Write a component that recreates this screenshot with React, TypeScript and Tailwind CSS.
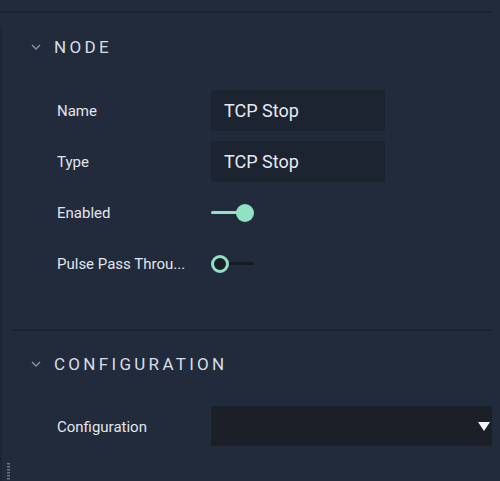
import React from "react";

const Chevron = () => (
  <svg width="10" height="6" viewBox="0 0 10 6" className="shrink-0">
    <path d="M1 1 L5 5 L9 1" fill="none" stroke="#8a93a2" strokeWidth="1.4" />
  </svg>
);

const Label = ({ children }: { children: React.ReactNode }) => (
  <div className="w-[154px] shrink-0 text-[15px] text-[#e1e5ec] leading-none pt-[2px]">{children}</div>
);

const Row = ({ label, children }: { label: string; children: React.ReactNode }) => (
  <div className="flex items-center h-[41px]">
    <Label>{label}</Label>
    {children}
  </div>
);

const TextBox = ({ value }: { value: string }) => (
  <div className="w-[174px] h-[41px] bg-[#1c2331] rounded-[2px] flex items-center pl-[13px] text-[18px] text-[#e6e9ee]">
    {value}
  </div>
);

export default function App() {
  return (
    <div
      className="w-[500px] h-[481px] bg-[#222b3b] relative overflow-hidden"
      style={{ fontFamily: "Roboto, 'Noto Sans', sans-serif" }}
    >
      <div className="absolute left-0 top-[27px] bottom-0 w-[2px] bg-[#1e2634]" />
      <div className="h-[11px]" />
      <div className="h-[2px] w-[492px] bg-[#1b2230]" />

      {/* NODE section */}
      <div className="h-[68px] flex items-center pl-[31px] gap-[13px]">
        <Chevron />
        <div className="text-[17px] tracking-[3.3px] text-[#d9dee6] leading-none">NODE</div>
      </div>
      <div className="h-[9px]" />
      <div className="pl-[57px] flex flex-col gap-[10px]">
        <Row label="Name">
          <TextBox value="TCP Stop" />
        </Row>
        <Row label="Type">
          <TextBox value="TCP Stop" />
        </Row>
        <Row label="Enabled">
          <div className="relative w-[45px] h-[20px] flex items-center">
            <div className="w-[28px] h-[3px] bg-[#8fe3c2] rounded-full" />
            <div className="absolute left-[25px] top-[1px] w-[18px] h-[18px] rounded-full bg-[#8fe3c2]" />
          </div>
        </Row>
        <Row label="Pulse Pass Throu...">
          <div className="relative w-[45px] h-[20px] flex items-center">
            <div className="absolute left-[16px] w-[27px] h-[3px] bg-[#161b24] rounded-full" />
            <div className="absolute left-0 top-[1px] w-[18px] h-[18px] rounded-full bg-[#1a1f28] border-[3px] border-[#8fe3c2]" />
          </div>
        </Row>
      </div>

      <div className="h-[45px]" />
      <div className="ml-[12px] h-[2px] w-[480px] bg-[#1b2230]" />

      {/* CONFIGURATION section */}
      <div className="h-[65px] flex items-center pl-[31px] gap-[13px] pt-[1px]">
        <Chevron />
        <div className="text-[17px] tracking-[3.3px] text-[#d9dee6] leading-none">CONFIGURATION</div>
      </div>
      <div className="h-[10px]" />
      <div className="pl-[57px] flex items-center h-[40px]">
        <Label>Configuration</Label>
        <div className="w-[281px] h-[40px] bg-[#1a1f28] rounded-[2px] flex items-center justify-end pr-[2px]">
          <svg width="12" height="9" viewBox="0 0 12 9">
            <path d="M0 0 L12 0 L6 9 Z" fill="#f2f4f7" />
          </svg>
        </div>
      </div>

      {/* grip */}
      <svg className="absolute left-[7px] top-[463px]" width="3" height="18" viewBox="0 0 3 18">
        {[0, 3, 6, 9, 12, 15].map((y) => (
          <rect key={y} x="0" y={y} width="3" height="1.5" fill="#6d7584" />
        ))}
      </svg>
    </div>
  );
}
